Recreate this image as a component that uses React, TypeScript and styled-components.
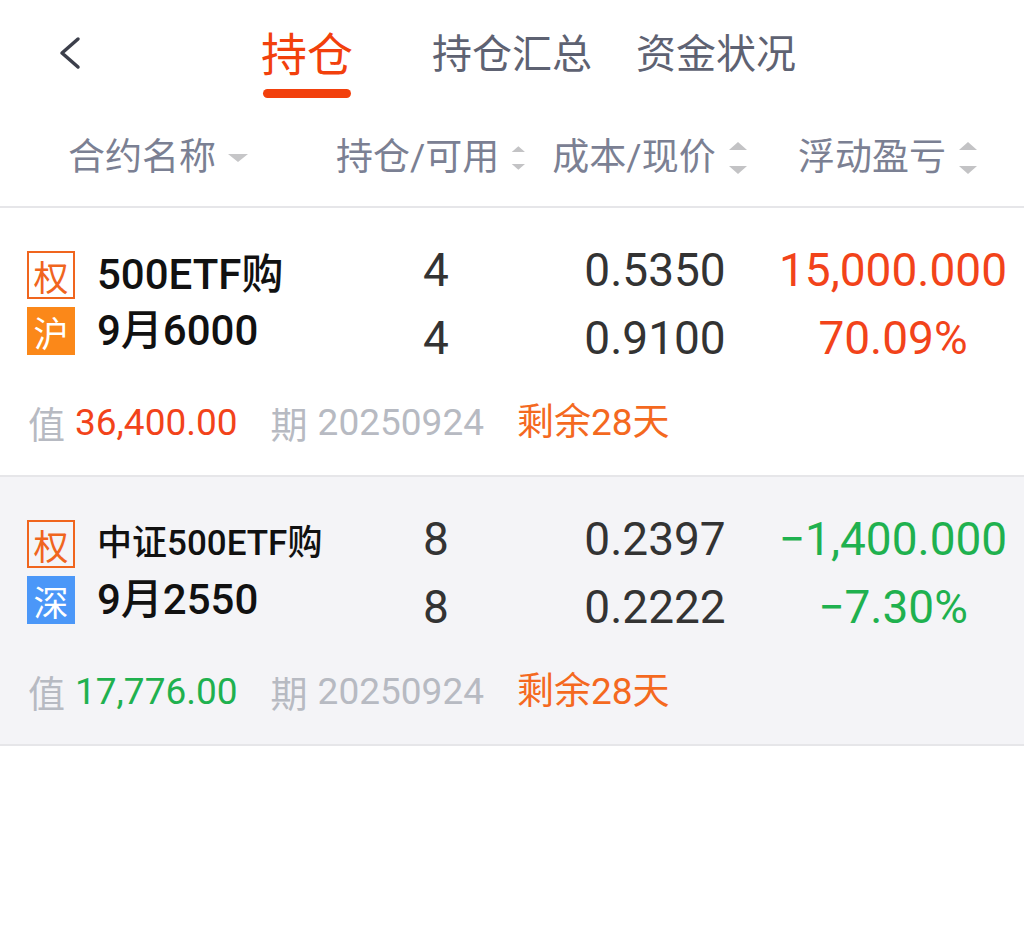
import React from "react";
import styled, { createGlobalStyle } from "styled-components";

const GlobalStyle = createGlobalStyle`
  html, body {
    margin: 0;
    padding: 0;
    background: #ffffff;
  }
  body {
    font-family: "Roboto", "Noto Sans CJK SC", sans-serif;
    -webkit-font-smoothing: antialiased;
  }
`;

const COLS = "336px 200px 238px 238px";

const Page = styled.div`
  width: 1024px;
  min-height: 933px;
  background: #ffffff;
`;

const TopBar = styled.header`
  display: flex;
  align-items: flex-start;
  height: 110px;
`;

const BackButton = styled.button`
  width: 40px;
  height: 40px;
  margin: 33px 0 0 50px;
  padding: 0;
  border: none;
  background: transparent;
  display: flex;
  align-items: center;
  justify-content: center;
`;

const Tabs = styled.nav`
  display: flex;
  gap: 44px;
  margin-left: 171px;
`;

const Tab = styled.div<{ $active?: boolean }>`
  display: flex;
  flex-direction: column;
  align-items: center;
  margin-right: ${(p) => (p.$active ? "35px" : "0")};
`;

const TabLabel = styled.span<{ $active?: boolean }>`
  margin-top: 20px;
  font-family: "Noto Sans CJK SC", sans-serif;
  font-size: ${(p) => (p.$active ? "46px" : "40px")};
  font-weight: 400;
  line-height: 62px;
  color: ${(p) => (p.$active ? "#f2400c" : "#5e6272")};
  white-space: nowrap;
`;

const Underline = styled.span`
  width: 88px;
  height: 9px;
  margin-top: 7px;
  border-radius: 5px;
  background: #f2400c;
`;

const ColumnHeader = styled.div`
  display: grid;
  grid-template-columns: ${COLS};
  height: 96px;
  align-items: center;
  border-bottom: 2px solid #e6e6e9;
`;

const HeadCell = styled.div<{ $first?: boolean }>`
  display: flex;
  align-items: center;
  gap: 12px;
  justify-content: ${(p) => (p.$first ? "flex-start" : "center")};
  padding-left: ${(p) => (p.$first ? "68px" : "0")};
  padding-right: ${(p) => (p.$first ? "0" : "10px")};
  font-size: 37px;
  color: #7b8093;
  white-space: nowrap;
  line-height: 48px;
`;

const PositionRow = styled.section<{ $shaded?: boolean }>`
  background: ${(p) => (p.$shaded ? "#f4f4f7" : "#ffffff")};
  border-bottom: 2px solid #e6e6e9;
`;

const MainGrid = styled.div`
  display: grid;
  grid-template-columns: ${COLS};
  align-items: start;
  padding-top: 28px;
`;

const NameCell = styled.div`
  display: flex;
  flex-direction: column;
  gap: 8px;
  padding: 15px 0 0 27px;
`;

const NameLine = styled.div`
  display: flex;
  align-items: center;
  gap: 22px;
  height: 48px;
`;

const Badge = styled.span<{ $variant: "option" | "sh" | "sz" }>`
  box-sizing: border-box;
  width: 48px;
  height: 48px;
  display: flex;
  align-items: center;
  justify-content: center;
  font-family: "Noto Sans CJK SC", sans-serif;
  font-size: 35px;
  line-height: 1;
  color: ${(p) => (p.$variant === "option" ? "#f0651e" : "#ffffff")};
  border: ${(p) => (p.$variant === "option" ? "2.5px solid #f0651e" : "none")};
  background: ${(p) =>
    p.$variant === "sh" ? "#fb8819" : p.$variant === "sz" ? "#4b97f8" : "transparent"};
`;

const NameText = styled.span<{ $size: number }>`
  font-size: ${(p) => p.$size}px;
  font-weight: 500;
  color: #111111;
  white-space: nowrap;
  line-height: 48px;
`;

const ValueCell = styled.div`
  display: flex;
  flex-direction: column;
  align-items: center;
`;

const ValueLine = styled.span<{ $color: string }>`
  font-size: 46px;
  line-height: 68px;
  color: ${(p) => p.$color};
  white-space: nowrap;
`;

const InfoLine = styled.div`
  display: flex;
  align-items: center;
  gap: 33px;
  height: 48px;
  margin-top: 27px;
  padding: 0 0 28px 28px;
  font-size: 37px;
  line-height: 48px;
  white-space: nowrap;
`;

const InfoItem = styled.span`
  display: flex;
  gap: 10px;
`;

const InfoLabel = styled.span`
  font-family: "Noto Sans CJK SC", sans-serif;
  color: #b7bac2;
`;

const InfoValue = styled.span<{ $color: string }>`
  color: ${(p) => p.$color};
`;

const Chevron = () => (
  <svg width="40" height="40" viewBox="0 0 40 40">
    <polyline
      points="28,6 12,20 28,34"
      fill="none"
      stroke="#3c3f4b"
      strokeWidth="3.5"
      strokeLinecap="round"
      strokeLinejoin="round"
    />
  </svg>
);

const SortIcon = () => (
  <svg width="20" height="36" viewBox="0 0 20 36">
    <polygon points="1,10 10,2 19,10" fill="#c3c3c5" />
    <polygon points="1,26 10,34 19,26" fill="#c3c3c5" />
  </svg>
);

const Caret = () => (
  <svg width="20" height="10" viewBox="0 0 20 10">
    <polygon points="0,1 20,1 10,9" fill="#c6c6c8" />
  </svg>
);

const RED = "#f2431a";
const GREEN = "#1fb14f";
const ORANGE = "#f4691f";
const DARK = "#333333";

type Position = {
  name: string;
  nameSize: number;
  strike: string;
  exchange: "sh" | "sz";
  exchangeLabel: string;
  hold: string;
  avail: string;
  cost: string;
  price: string;
  pnl: string;
  pnlPct: string;
  up: boolean;
  value: string;
  expiry: string;
  remain: string;
};

const positions: Position[] = [
  {
    name: "500ETF购",
    nameSize: 42,
    strike: "9月6000",
    exchange: "sh",
    exchangeLabel: "沪",
    hold: "4",
    avail: "4",
    cost: "0.5350",
    price: "0.9100",
    pnl: "15,000.000",
    pnlPct: "70.09%",
    up: true,
    value: "36,400.00",
    expiry: "20250924",
    remain: "剩余28天",
  },
  {
    name: "中证500ETF购",
    nameSize: 35,
    strike: "9月2550",
    exchange: "sz",
    exchangeLabel: "深",
    hold: "8",
    avail: "8",
    cost: "0.2397",
    price: "0.2222",
    pnl: "\u22121,400.000",
    pnlPct: "\u22127.30%",
    up: false,
    value: "17,776.00",
    expiry: "20250924",
    remain: "剩余28天",
  },
];

export default function App() {
  return (
    <Page>
      <GlobalStyle />
      <TopBar>
        <BackButton aria-label="返回">
          <Chevron />
        </BackButton>
        <Tabs>
          <Tab $active>
            <TabLabel $active>持仓</TabLabel>
            <Underline />
          </Tab>
          <Tab>
            <TabLabel>持仓汇总</TabLabel>
          </Tab>
          <Tab>
            <TabLabel>资金状况</TabLabel>
          </Tab>
        </Tabs>
      </TopBar>

      <ColumnHeader>
        <HeadCell $first>
          合约名称
          <Caret />
        </HeadCell>
        <HeadCell>
          持仓/可用
          <SortIcon />
        </HeadCell>
        <HeadCell>
          成本/现价
          <SortIcon />
        </HeadCell>
        <HeadCell>
          浮动盈亏
          <SortIcon />
        </HeadCell>
      </ColumnHeader>

      {positions.map((p, i) => {
        const pnlColor = p.up ? RED : GREEN;
        return (
          <PositionRow key={i} $shaded={i % 2 === 1}>
            <MainGrid>
              <NameCell>
                <NameLine>
                  <Badge $variant="option">权</Badge>
                  <NameText $size={p.nameSize}>{p.name}</NameText>
                </NameLine>
                <NameLine>
                  <Badge $variant={p.exchange}>{p.exchangeLabel}</Badge>
                  <NameText $size={42}>{p.strike}</NameText>
                </NameLine>
              </NameCell>
              <ValueCell>
                <ValueLine $color={DARK}>{p.hold}</ValueLine>
                <ValueLine $color={DARK}>{p.avail}</ValueLine>
              </ValueCell>
              <ValueCell>
                <ValueLine $color={DARK}>{p.cost}</ValueLine>
                <ValueLine $color={DARK}>{p.price}</ValueLine>
              </ValueCell>
              <ValueCell>
                <ValueLine $color={pnlColor}>{p.pnl}</ValueLine>
                <ValueLine $color={pnlColor}>{p.pnlPct}</ValueLine>
              </ValueCell>
            </MainGrid>
            <InfoLine>
              <InfoItem>
                <InfoLabel>值</InfoLabel>
                <InfoValue $color={pnlColor}>{p.value}</InfoValue>
              </InfoItem>
              <InfoItem>
                <InfoLabel>期</InfoLabel>
                <InfoValue $color="#b7bac2">{p.expiry}</InfoValue>
              </InfoItem>
              <InfoItem>
                <InfoValue $color={ORANGE}>{p.remain}</InfoValue>
              </InfoItem>
            </InfoLine>
          </PositionRow>
        );
      })}
    </Page>
  );
}
